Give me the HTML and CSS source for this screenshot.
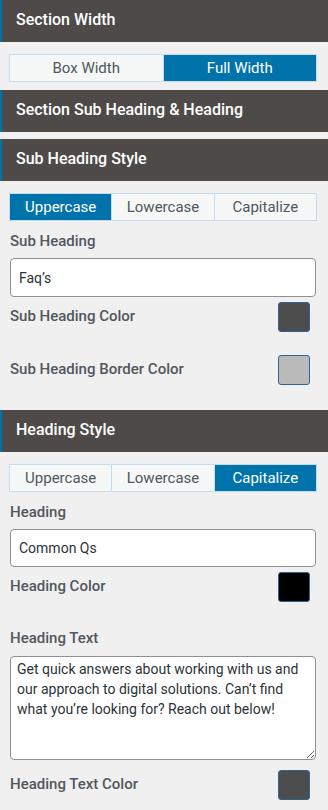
FILE: index.html
```html
<!DOCTYPE html>
<html lang="en">
<head>
<meta charset="UTF-8">
<meta name="viewport" content="width=device-width, initial-scale=1.0">
<title>Section Settings</title>
<link rel="stylesheet" href="styles.css">
</head>
<body>
  <div class="section-head">Section Width</div>
  <div class="panel panel-width">
    <div class="toggle">
      <button class="toggle-btn">Box Width</button>
      <button class="toggle-btn active">Full Width</button>
    </div>
  </div>

  <div class="section-head head-gap">Section Sub Heading &amp; Heading</div>

  <div class="section-head">Sub Heading Style</div>
  <div class="panel">
    <div class="toggle">
      <button class="toggle-btn active">Uppercase</button>
      <button class="toggle-btn">Lowercase</button>
      <button class="toggle-btn">Capitalize</button>
    </div>
    <label class="field-label">Sub Heading</label>
    <input class="text-input" type="text" value="Faq’s">
    <div class="color-row">
      <span class="color-label">Sub Heading Color</span>
      <span class="swatch swatch-dark"></span>
    </div>
    <div class="color-row row-spaced">
      <span class="color-label">Sub Heading Border Color</span>
      <span class="swatch swatch-light"></span>
    </div>
  </div>

  <div class="section-head">Heading Style</div>
  <div class="panel panel-last">
    <div class="toggle">
      <button class="toggle-btn">Uppercase</button>
      <button class="toggle-btn">Lowercase</button>
      <button class="toggle-btn active">Capitalize</button>
    </div>
    <label class="field-label">Heading</label>
    <input class="text-input input-short" type="text" value="Common Qs">
    <div class="color-row">
      <span class="color-label">Heading Color</span>
      <span class="swatch swatch-black"></span>
    </div>
    <label class="field-label label-spaced">Heading Text</label>
    <textarea class="text-area">Get quick answers about working with us and our approach to digital solutions. Can’t find what you’re looking for? Reach out below!</textarea>
    <div class="color-row row-after-area">
      <span class="color-label">Heading Text Color</span>
      <span class="swatch swatch-dark"></span>
    </div>
  </div>
</body>
</html>
```

FILE: styles.css
```css
body {
  margin: 0;
  padding: 0;
  font-family: Roboto, "Liberation Sans", sans-serif;
  background-color: #f0f0f0;
  color: #50575e;
}
.section-head {
  height: 42px;
  line-height: 40px;
  padding-left: 14px;
  background-color: #4e4a48;
  border-left: 2px solid #0073aa;
  color: #ffffff;
  font-size: 16px;
  font-weight: 500;
  box-sizing: border-box;
}
.head-gap {
  margin-bottom: 7px;
}
.panel {
  padding: 12px 11px 25px 9px;
}
.panel-width {
  padding-bottom: 8px;
}
.panel-last {
  padding-bottom: 8px;
}
.toggle {
  display: flex;
  height: 28px;
  border: 1px solid #c5dcef;
  box-sizing: border-box;
}
.toggle-btn {
  flex: 1;
  border: none;
  border-left: 1px solid #c5dcef;
  background-color: #f6f7f7;
  color: #50575e;
  font-family: Roboto, "Liberation Sans", sans-serif;
  font-size: 15px;
  padding: 0;
  cursor: pointer;
}
.toggle-btn:first-child {
  border-left: none;
}
.toggle-btn.active {
  background-color: #0073aa;
  color: #ffffff;
}
.field-label {
  display: block;
  margin: 10px 1px 0;
  line-height: 20px;
  font-size: 15px;
  font-weight: 500;
}
.label-spaced {
  margin-top: 26px;
}
.text-input {
  display: block;
  width: 306px;
  height: 39px;
  margin: 7px 1px 0;
  padding: 0 8px;
  border: 1px solid #8c8f94;
  border-radius: 4px;
  background-color: #ffffff;
  color: #2c3338;
  font-family: Roboto, "Liberation Sans", sans-serif;
  font-size: 14px;
  box-sizing: border-box;
}
.input-short {
  height: 38px;
}
.text-area {
  display: block;
  width: 306px;
  height: 104px;
  margin: 8px 1px 0;
  padding: 2px 6px;
  border: 1px solid #8c8f94;
  border-radius: 4px;
  background-color: #ffffff;
  color: #2c3338;
  font-family: Roboto, "Liberation Sans", sans-serif;
  font-size: 14px;
  line-height: 20px;
  box-sizing: border-box;
}
.color-row {
  display: flex;
  align-items: center;
  justify-content: space-between;
  margin: 5px 7px 0 1px;
}
.row-spaced {
  margin-top: 23px;
}
.row-after-area {
  margin-top: 10px;
}
.color-label {
  font-size: 15px;
  font-weight: 500;
  margin-top: -3px;
}
.swatch {
  width: 32px;
  height: 30px;
  border: 1px solid #2f6592;
  border-radius: 3px;
  box-sizing: border-box;
}
.swatch-dark {
  background-color: #4d4d4d;
}
.swatch-light {
  background-color: #bababa;
}
.swatch-black {
  background-color: #000000;
}
```
